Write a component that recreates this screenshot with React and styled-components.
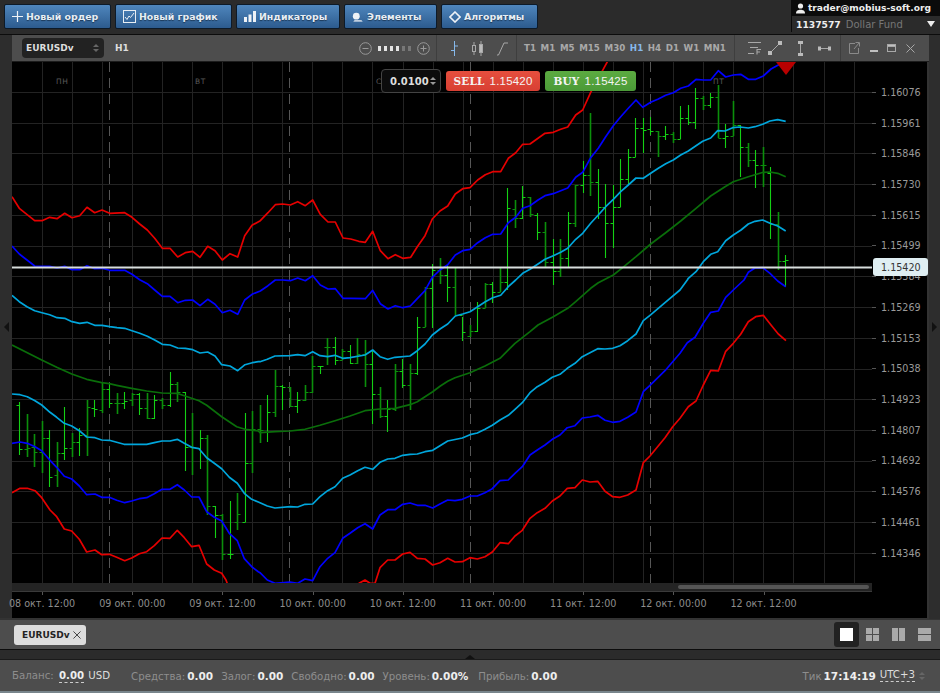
import React from "react";
import styled, { createGlobalStyle } from "styled-components";

const GlobalStyle = createGlobalStyle`
  html, body {
    margin: 0;
    padding: 0;
    background: #2b2b2b;
    overflow: hidden;
  }
  * {
    box-sizing: border-box;
  }
`;

const FONT = `"DejaVu Sans", Verdana, sans-serif`;

// traced points, z = [originX, originY, [x, y, x, y...]] in 3x zoom units
const trace = (...parts) => {
  const out = [];
  parts.forEach(([ox, oy, pts]) => {
    for (let i = 0; i < pts.length; i += 2) {
      const x = ox + pts[i] / 3;
      const y = oy + pts[i + 1] / 3;
      if (!out.length || x > out[out.length - 1][0]) out.push([x, y]);
    }
  });
  return out.map((p) => p[0].toFixed(1) + "," + p[1].toFixed(1)).join(" ");
};

const LINES = [
  {
    color: "#e60000",
    points: trace(
      [12, 60, [0,410,22,445,68,482,90,482,113,472,135,476,158,460,180,473,203,467,225,442,248,458,270,450,293,460,338,458,360,472,383,492,406,510,428,535,451,565,474,565,497,591,520,578,542,574,564,592,587,559,609,572,631,600,654,581,677,591,698,527,720,496,745,482,768,458,790,434,812,432,835,435,857,425,880,437,902,420,925,463,948,486,970,486,993,534,1016,537,1040,544,1060,547,1082,514,1105,572,1128,596,1150,584,1172,595,1195,592]],
      [400, 60, [10,595,32,592,52,560,75,527,97,477,120,453,143,438,166,402,188,386,210,383,233,360,256,344,278,335,302,335,325,295,347,278,368,253,390,252,414,235,435,220,460,217,482,208,503,201,527,165,548,150,572,97,595,55,625,0,660,-60]]
    ),
  },
  {
    color: "#0000ff",
    points: trace(
      [12, 60, [0,558,22,582,45,600,68,618,113,619,135,624,158,619,180,629,203,629,225,617,248,626,270,625,293,631,338,631,360,643,383,659,406,671,428,690,451,709,474,709,497,728,520,721,542,720,564,737,587,718,609,733,631,758,654,751,677,763,698,720,720,703,745,693,768,677,790,660,812,660,835,662,857,654,880,662,902,647,925,675,948,687,970,686,993,715,1016,715,1060,716,1082,691,1105,731,1128,747,1150,737,1172,743,1195,738]],
      [400, 60, [30,741,52,716,75,692,97,652,120,630,143,614,166,585,188,572,210,568,233,548,256,533,278,523,302,522,325,488,347,472,368,445,390,437,414,420,435,407,460,401,482,392,503,384,527,352,548,337,572,293,595,265,617,230,640,197,662,170,685,145,708,120,728,142,752,127,775,117,797,106,820,98,842,85,865,78,888,58]],
      [470, 0, [700,240,722,240,745,212,767,231,790,225,812,223,835,238,857,238,880,228,903,207,925,195,945,182]]
    ),
  },
  {
    color: "#00a6dc",
    points: trace(
      [12, 60, [0,706,22,725,45,740,68,752,90,758,113,764,135,773,158,775,180,785,203,790,225,787,248,796,270,796,293,800,315,803,338,805,360,812,383,820,406,829,428,840,451,853,474,855,497,864,520,865,542,869,564,879,587,876,609,888]],
      [0, 360, [665,14,690,18,713,32,735,14,757,8,775,5]],
      [260, 340, [0,65,22,58,45,48,90,47,113,44,135,47,158,35,180,47,203,50,225,46,248,55,270,53,315,45,338,30,360,50,383,58,405,52,450,48,472,32,495,12,505,0]],
      [400, 60, [30,888,52,872,75,850,97,825,120,807,143,792,166,768,188,762,210,755,233,740,256,725,278,713,302,706,325,680,347,660,368,640,390,628,414,612,435,598,460,587,482,577,503,565,527,538,548,520,572,490,595,465,617,440,640,418,662,395,685,375,708,354,730,355,752,340,775,325,797,311,820,300,842,285,865,273,888,257]],
      [680, 60, [22,272,45,252,68,244,92,234,113,212,135,213,158,203,180,201,205,204,225,200,248,193,270,183,293,179,317,184]]
    ),
  },
  {
    color: "#0a6e0a",
    points: trace(
      [12, 345, [0,0,89,45]],
      [0, 360, [170,22,215,42,260,58,305,68,328,71,350,76,395,85,440,93,486,99,530,100,553,107,597,122,620,136,665,170,710,200,735,208,775,213]],
      [260, 340, [0,278,45,275,90,273,135,268,180,256,225,242,270,228,315,212,360,207,405,205,450,194,472,185,495,170,518,155,540,139,563,124,585,113,630,98,675,78,720,55]],
      [400, 60, [300,890,345,850,390,815,414,795,460,770,503,745,527,725,572,685,595,668,640,645,665,625,708,590,752,552,797,518,842,483,888,445]],
      [680, 60, [45,450,92,408,135,380,160,365,205,350,250,337,270,336,293,340,317,350]]
    ),
  },
  {
    color: "#00a6dc",
    points: trace(
      [0, 360, [36,102,60,104,82,110,105,122,125,135,150,157,170,172,193,190,215,198,238,212,260,231,285,233,305,240,328,241,350,247,372,253,395,253,440,253,463,248,486,243,510,243,532,238,553,250,575,262,597,266,620,293,643,310,665,326,688,352,712,370,733,400,755,418,775,426]],
      [260, 340, [0,488,22,498,45,504,90,500,113,501,135,493,158,492,180,470,203,452,225,440,248,415,270,405,293,392,315,382,338,388,360,367,383,357,405,355,428,346,450,343,472,342,495,335,518,331,540,317,563,303,607,294,630,284,652,279,675,268,697,256,720,240,745,226,765,208,787,188,810,158,832,140,855,127,877,112]],
      [550, 280, [0,300,30,283,52,265,75,250,97,230,120,218,143,206,165,207,188,205,210,197,233,182,258,162,280,122,300,106,345,68,390,30,412,0]],
      [400, 60, [662,855,685,840,708,820,730,785,752,765,797,720,842,680,865,655,888,635]],
      [680, 60, [0,680,22,660,48,635,70,605,92,583,113,575,137,542,160,525,183,510,205,492,225,484,248,480,270,490,293,498,317,513]]
    ),
  },
  {
    color: "#0000ff",
    points: trace(
      [0, 360, [36,250,60,246,82,250,105,260,125,272,150,301,170,322,193,349,215,357,238,378,260,404,285,402,305,412,328,412,350,421,374,428,395,423,418,416,440,413,463,401,486,388,510,388,532,374,553,390,575,411,597,411,620,455,643,472,665,483,688,520,712,542,733,596,755,620,775,635]],
      [260, 340, [0,698,22,720,45,730,90,726,113,730,135,717,158,722,180,680,203,655,225,638,248,595,270,580,293,563,315,551,338,567,360,525,383,509,405,509,428,493,450,489,472,496,495,496,518,504,540,492,563,480,585,482,607,478,630,468,652,468,675,458,697,446,720,422,745,420,765,400,787,380,810,345,832,330,855,315,877,298]],
      [550, 280, [0,485,30,465,52,443,75,437,97,414,120,411,143,406,165,421,188,427,210,424,233,412,258,396,280,335,300,316,345,272,390,220,412,188,435,172,460,130,482,97,505,93,527,52,550,30,582,0]],
      [680, 60, [160,690,183,668,205,637,225,624,248,623,270,640,293,663,317,680]]
    ),
  },
  {
    color: "#e60000",
    points: trace(
      [0, 360, [36,398,60,385,82,385,105,392,125,413,150,450,170,470,193,507,215,513,238,538,260,576,285,570,305,584,328,583,350,592,374,602,395,594,418,581,440,575,463,557,486,534,510,535,532,511,553,533,575,560,597,556,620,612,643,630,665,640,678,660,700,720,1050,720]],
      [260, 340, [297,730,315,720,330,730,345,730,360,683,383,660,405,660,428,642,450,637,472,655,495,657,518,675,540,668,563,655,585,666,607,665,630,653,652,657,675,650,697,636,720,608,745,611,765,588,787,571,810,535,832,518,855,505,877,483]],
      [550, 280, [0,670,30,648,52,625,75,623,97,600,120,606,143,604,165,634,188,650,210,652,233,645,258,630,280,548,300,528,345,473,368,440,390,415,415,380,438,363,460,315,482,271,505,273,527,214,550,190,572,163,595,125,617,110,640,106,663,135,685,162,708,182]]
    ),
  },
];

// [high, low, open, close, dark]
const BARS = [
  null,
  [402,455,405,449,0],[414,457,449,448,1],[434,467,447,452,1],[421,473,452,438,1],[430,487,438,477,0],
  [442,487,475,453,1],[407,460,453,448,0],[433,457,448,442,1],[428,456,442,435,0],[400,456,435,407,1],
  [400,417,408,409,0],[383,413,410,389,1],[384,408,389,403,0],[393,414,403,403,1],[392,409,403,401,0],
  [393,406,400,394,1],[393,415,394,408,0],[393,419,408,418,1],[395,419,418,400,0],[398,409,400,405,1],
  [372,407,405,384,0],[382,402,384,392,1],[392,471,392,447,0],[413,475,447,447,1],[430,469,448,438,0],
  [435,515,438,506,1],[506,538,506,515,0],[514,560,515,554,1],[501,559,554,554,0],[493,530,522,514,1],
  [413,522,522,463,0],[411,473,463,429,1],[405,443,429,430,1],[395,442,432,412,0],[370,417,412,386,1],
  [385,410,386,387,0],[387,407,387,406,1],[392,413,406,400,0],[385,401,400,392,1],[356,393,392,366,1],
  [366,374,366,366,0],[338,365,347,347,1],[337,365,347,360,0],[349,360,360,351,1],[345,364,351,363,0],
  [338,364,363,354,1],[340,387,354,364,1],[350,424,364,394,0],[387,418,394,416,1],[400,432,416,409,0],
  [364,411,409,371,1],[359,388,371,385,0],[364,410,385,373,1],[317,375,373,327,0],[287,327,327,288,1],
  [264,328,288,270,0],[258,284,270,275,1],[265,302,275,287,0],[268,315,287,315,1],[317,341,315,332,0],
  [325,337,336,331,1],[302,332,331,308,0],[283,308,308,284,1],[282,303,284,292,0],[268,292,292,282,1],
  [188,290,282,208,0],[200,228,209,218,1],[186,219,218,197,0],[197,217,197,214,1],[213,240,215,232,0],
  [222,268,232,262,1],[239,285,262,271,0],[239,277,271,258,1],[212,267,258,223,0],[185,227,223,185,1],
  [161,193,185,175,0],[113,196,175,182,1],[169,219,182,207,0],[184,258,207,223,0],[185,248,223,207,0],
  [159,207,207,179,0],[149,185,179,157,0],[118,157,157,128,0],[118,153,128,130,0],[117,135,129,131,0],
  [131,157,131,136,1],[126,140,136,134,0],[132,143,134,139,1],[106,139,139,118,0],[105,125,118,122,0],
  [88,129,122,98,0],[96,110,98,105,1],[93,108,105,97,0],[85,138,97,138,1],[124,148,138,136,0],
  [101,136,136,125,1],[125,177,125,147,0],[143,167,147,160,1],[150,188,160,165,0],[147,187,165,165,1],
  [167,239,173,224,0],[212,270,224,261,1],[255,287,261,260,0],
];

const PRICES = [
  "1.16076", "1.15961", "1.15846", "1.15730", "1.15615", "1.15499", "1.15384", "1.15269",
  "1.15153", "1.15038", "1.14923", "1.14807", "1.14692", "1.14576", "1.14461", "1.14346",
];

const TIMES = [
  "08 окт. 12:00", "09 окт. 00:00", "09 окт. 12:00", "10 окт. 00:00", "10 окт. 12:00",
  "11 окт. 00:00", "11 окт. 12:00", "12 окт. 00:00", "12 окт. 12:00",
];

const FRAMES = ["T1", "M1", "M5", "M15", "M30", "H1", "H4", "D1", "W1", "MN1"];

const Page = styled.div`
  width: 940px;
  height: 693px;
  display: flex;
  flex-direction: column;
  background: #2b2b2b;
  font-family: ${FONT};
  overflow: hidden;
`;

const TopBar = styled.div`
  height: 35px;
  flex: none;
  display: flex;
  align-items: flex-start;
  padding: 4px 0 0 4px;
  gap: 4px;
  background: #2b2b2b;
  border-bottom: 1px solid #0c0c0c;
`;

const ActionButton = styled.div`
  width: ${(p) => p.$w}px;
  height: 25px;
  display: flex;
  align-items: center;
  gap: 3px;
  padding-left: 7px;
  background: linear-gradient(#4f86bd, #2c5b8e);
  border: 1px solid #0d1a28;
  border-radius: 2px;
  color: #e8eef4;
  font-size: 9.4px;
  font-weight: bold;
  text-shadow: 0 1px 1px #1b3857;
`;

const Account = styled.div`
  margin: -4px 0 0 auto;
  width: 149px;
  height: 32px;
  font-size: 9.2px;
  font-weight: bold;
  color: #eee;
`;

const AccountMail = styled.div`
  height: 16px;
  background: #0b0b0b;
  display: flex;
  align-items: center;
  gap: 2px;
  padding-left: 4px;
  font-size: 9.1px;
  white-space: nowrap;
`;

const AccountFund = styled.div`
  height: 16px;
  display: flex;
  align-items: center;
  gap: 5px;
  padding: 0 5px 0 4px;
  background: #2b2b2b;
  border-left: 1px solid #0b0b0b;
  span {
    color: #777;
    font-size: 10px;
    font-weight: normal;
  }
  i {
    margin-left: auto;
    border: 4px solid transparent;
    border-top: 6px solid #eee;
    border-bottom: 0;
  }
`;

const Middle = styled.div`
  height: 584px;
  flex: none;
  display: flex;
`;

const SideStrip = styled.div`
  width: ${(p) => p.$w}px;
  flex: none;
  display: flex;
  align-items: center;
  justify-content: center;
  background: #2d2d2d;
  i {
    border: 5px solid transparent;
    border-${(p) => (p.$right ? "right" : "left")}-width: 0;
    border-${(p) => (p.$right ? "left" : "right")}: 5px solid #111;
  }
`;

const ChartWindow = styled.div`
  width: 917px;
  flex: none;
  display: flex;
  flex-direction: column;
  background: #000;
`;

const ChartHeader = styled.div`
  height: 27px;
  flex: none;
  display: flex;
  align-items: center;
  background: #4d4d4d;
  border-bottom: 1px solid #1c1c1c;
  color: #b5b5b5;
  font-size: 9px;
  font-weight: bold;
`;

const HeaderGroup = styled.div`
  height: 100%;
  width: ${(p) => p.$w}px;
  flex: none;
  display: flex;
  align-items: center;
  gap: ${(p) => p.$gap || 0}px;
  padding-left: ${(p) => p.$pad || 0}px;
  border-right: ${(p) => (p.$plain ? "0" : "1px solid #3e3e3e")};
`;

const ZoomControl = styled.div`
  margin: 0 6px 0 auto;
  display: flex;
  align-items: center;
  gap: 5px;
`;

const SymbolSelect = styled.div`
  width: 82px;
  height: 20px;
  display: flex;
  align-items: center;
  justify-content: space-between;
  padding: 0 5px 0 4px;
  background: #222;
  border-radius: 4px;
  color: #ddd;
`;

const FrameName = styled.span`
  color: #ddd;
  margin-left: 11px;
`;

const ZoomDots = styled.div`
  display: flex;
  gap: 3px;
  margin: 0 1px;
`;

const ZoomDot = styled.i`
  width: 3px;
  height: 5px;
  background: ${(p) => (p.$off ? "#777" : "#e4e4e4")};
`;

const Frame = styled.span`
  color: ${(p) => (p.$active ? "#86b8ea" : "#a9a9a9")};
  font-size: 8.7px;
`;

const SpinnerBox = styled.div`
  display: flex;
  flex-direction: column;
  gap: 2px;
  i {
    border: 3px solid transparent;
  }
  i:first-child {
    border-top: 0;
    border-bottom: 3px solid ${(p) => p.$color || "#666"};
  }
  i:last-child {
    border-bottom: 0;
    border-top: 3px solid ${(p) => p.$color || "#666"};
  }
`;

const Spinner = ({ color }) => (
  <SpinnerBox $color={color}>
    <i />
    <i />
  </SpinnerBox>
);

const ChartBody = styled.div`
  flex: 1;
  display: flex;
  position: relative;
`;

const PlotColumn = styled.div`
  width: 860px;
  flex: none;
  display: flex;
  flex-direction: column;
  position: relative;
`;

const PlotSvg = styled.svg`
  display: block;
  flex: none;
`;

const Scroller = styled.div`
  height: 9px;
  flex: none;
  display: flex;
  justify-content: flex-end;
  align-items: center;
  padding-right: 3px;
  background: #242424;
  border-bottom: 1px solid #3a3a3a;
  i {
    width: 191px;
    height: 4px;
    background: #555;
    border-radius: 2px;
  }
`;

const TimeAxis = styled.div`
  flex: 1;
  display: flex;
  margin-left: -15px;
  overflow: hidden;
  border-bottom: 1px solid #333;
`;

const TimeCell = styled.div`
  width: 90.2px;
  flex: none;
  position: relative;
  padding-top: 6px;
  text-align: center;
  white-space: nowrap;
  color: #8d8d8d;
  font-size: 9.6px;
  &::before {
    content: "";
    position: absolute;
    left: 45px;
    top: 0;
    width: 1px;
    height: 3px;
    background: #555;
  }
`;

const PriceAxis = styled.div`
  flex: 1;
  padding-top: 15px;
  border-bottom: 1px solid #333;
  position: relative;
  border-right: 2px solid #333;
`;

const PriceRow = styled.div`
  height: 30.73px;
  display: flex;
  align-items: center;
  gap: 5px;
  color: #9a9a9a;
  font-size: 9.6px;
  &::before {
    content: "";
    width: 4px;
    height: 1px;
    background: #555;
  }
`;

const PriceTag = styled.div`
  position: absolute;
  left: 1px;
  top: 196px;
  width: 55px;
  height: 18px;
  display: flex;
  align-items: center;
  padding-left: 8px;
  background: #dfeef2;
  border-radius: 3px;
  color: #333;
  font-size: 9.6px;
`;

const DayLabel = styled.span`
  position: absolute;
  left: ${(p) => p.$x}px;
  top: 15px;
  color: #5a5a5a;
  font-size: 7.5px;
  letter-spacing: 0.6px;
`;

const Ticket = styled.div`
  position: absolute;
  left: 369px;
  top: 7px;
  display: flex;
  align-items: center;
  gap: 5px;
`;

const LotBox = styled.div`
  width: 60px;
  height: 24px;
  display: flex;
  align-items: center;
  justify-content: space-between;
  padding: 0 4px 0 8px;
  background: #0c0c0c;
  border: 1px solid #444;
  border-radius: 4px;
  color: #ddd;
  font-size: 10px;
  font-weight: bold;
`;

const TradeButton = styled.div`
  width: ${(p) => p.$w}px;
  height: 20px;
  display: flex;
  align-items: center;
  justify-content: center;
  gap: 5px;
  margin-right: ${(p) => p.$gap || 0}px;
  border-radius: 3px;
  background: ${(p) => p.$bg};
  color: #f4f4f4;
  font-family: "Liberation Sans", Arial, sans-serif;
  font-size: 11.5px;
  letter-spacing: 0.2px;
  b {
    font-family: "DejaVu Serif", serif;
    font-size: 10.5px;
  }
`;

const TabBar = styled.div`
  height: 30px;
  flex: none;
  display: flex;
  align-items: center;
  justify-content: space-between;
  padding: 0 3px 0 14px;
  background: #4d4d4d;
  border-top: 1px solid #333;
`;

const Tab = styled.div`
  width: 72px;
  height: 20px;
  display: flex;
  align-items: center;
  justify-content: space-between;
  padding: 0 5px 0 8px;
  background: #dcdcdc;
  border-radius: 3px;
  color: #222;
  font-size: 9px;
  font-weight: bold;
`;

const LayoutButtons = styled.div`
  display: flex;
  gap: 1px;
`;

const LayoutButton = styled.div`
  width: 25px;
  height: 25px;
  display: flex;
  align-items: center;
  justify-content: center;
  border-radius: 3px;
  background: ${(p) => (p.$active ? "#222" : "transparent")};
`;

const Splitter = styled.div`
  height: 11px;
  flex: none;
  display: flex;
  justify-content: center;
  align-items: flex-end;
  background: #2b2b2b;
  border-top: 1px solid #0c0c0c;
  border-bottom: 1px solid #1a1a1a;
  i {
    border: 5px solid transparent;
    border-top: 0;
    border-bottom: 4px solid #111;
  }
`;

const StatusBar = styled.div`
  flex: 1;
  display: flex;
  align-items: center;
  padding: 0 15px 0 12px;
  background: #4d4d4d;
  border-bottom: 2px solid #78858c;
  color: #8e8e8e;
  font-size: 10.2px;
`;

const StatusItem = styled.span`
  margin-right: ${(p) => p.$gap}px;
  white-space: nowrap;
`;

const Value = styled.b`
  margin-left: 2px;
  color: #eee;
  font-size: 10.5px;
`;

const Dashed = styled.span`
  color: ${(p) => (p.$light ? "#ddd" : "#eee")};
  font-weight: ${(p) => (p.$light ? "normal" : "bold")};
  margin-left: ${(p) => (p.$light ? 0 : 2)}px;
  padding-bottom: 1px;
  border-bottom: 1px dashed #ccc;
`;

const Currency = styled.span`
  margin-left: 1px;
  color: #ddd;
`;

const StatusRight = styled.div`
  margin-left: auto;
  display: flex;
  align-items: center;
  gap: 4px;
`;

const Ico = styled.svg`
  flex: none;
  display: block;
`;

const PlusIcon = () => (
  <Ico width="11" height="11" viewBox="0 0 11 11" fill="none" stroke="#eef2f6" strokeWidth="1.2">
    <path d="M5.5 0v11M0 5.5h11" />
  </Ico>
);

const ChartIcon = () => (
  <Ico width="13" height="13" viewBox="0 0 13 13" fill="none" stroke="#e8eef4">
    <rect x=".5" y=".5" width="12" height="12" />
    <path d="M2 7l2 2.5L6 6l1.5 1.5L11 3" />
  </Ico>
);

const BarsIcon = () => (
  <Ico width="12" height="11" viewBox="0 0 12 11" fill="#eef2f6">
    <path d="M0 6h3v5H0zM4.5 3.5h3V11h-3zM9 0h3v11H9z" />
  </Ico>
);

const ElementsIcon = () => (
  <Ico width="12" height="12" viewBox="0 0 14 12" fill="#eef2f6">
    <circle cx="5" cy="5" r="4" />
    <path d="M3 9.5h8l1.5 2H1.5z" opacity=".75" />
  </Ico>
);

const DiamondIcon = () => (
  <Ico width="12" height="12" viewBox="0 0 12 12" fill="none" stroke="#eef2f6" strokeWidth="1.6">
    <path d="M6 1l5 5-5 5-5-5z" />
  </Ico>
);

const UserIcon = () => (
  <Ico width="11" height="11" viewBox="0 0 11 11" fill="#eee">
    <circle cx="5.5" cy="3" r="2.6" />
    <path d="M1 10.5c0-3 2-3.8 4.5-3.8s4.5.8 4.5 3.8z" />
  </Ico>
);

const CircleIcon = ({ plus }) => (
  <Ico width="13" height="13" viewBox="0 0 13 13" fill="none" stroke="#999">
    <circle cx="6.5" cy="6.5" r="5.8" />
    <path d={plus ? "M3.5 6.5h6M6.5 3.5v6" : "M3.5 6.5h6"} />
  </Ico>
);

const ToolIcon = ({ w = 13, h = 15, children, stroke = "#a8a8a8" }) => (
  <Ico width={w} height={h} viewBox={`0 0 ${w} ${h}`} fill="none" stroke={stroke}>
    {children}
  </Ico>
);

const CloseIcon = ({ color = "#a8a8a8", size = 9 }) => (
  <Ico width={size} height={size} viewBox="0 0 9 9" fill="none" stroke={color}>
    <path d="M.5.5l8 8M8.5.5l-8 8" />
  </Ico>
);

const LayoutIcon = ({ kind }) => (
  <Ico width="13" height="13" viewBox="0 0 13 13" fill={kind === "one" ? "#fff" : "#aaa"}>
    {kind === "one" && <rect width="13" height="13" />}
    {kind === "grid" && <path d="M0 0h6v6H0zM7 0h6v6H7zM0 7h6v6H0zM7 7h6v6H7z" />}
    {kind === "cols" && <path d="M0 0h6v13H0zM7 0h6v13H7z" />}
    {kind === "rows" && <path d="M0 0h13v6H0zM0 7h13v6H0z" />}
  </Ico>
);

const Chart = () => {
  const gridX = [];
  for (let i = 0; i < 28; i++) gridX.push(Math.round(41.7 + 30.07 * i) + 0.5);
  const gridY = [];
  for (let i = -1; i < 16; i++) gridY.push(Math.round(92 + 30.73 * i) + 0.5);

  return (
    <PlotSvg width="860" height="521" viewBox="12 62 860 521">
      {gridX.map((x) => (
        <line key={x} x1={x} x2={x} y1="62" y2="583" stroke="#232323" />
      ))}
      {gridY.map((y) => (
        <line key={y} x1="12" x2="872" y1={y} y2={y} stroke="#232323" />
      ))}
      {[109.5, 289.5, 470.5, 650.5].map((x) => (
        <line key={x} x1={x} x2={x} y1="62" y2="583" stroke="#565656" strokeDasharray="10 6" />
      ))}
      {BARS.map((b, i) => {
        if (!b) return null;
        const x = Math.round(11.8 + 7.51 * i) + 0.5;
        const color = b[4] ? "#0b8f0b" : "#14d014";
        return (
          <g key={i} stroke={color} fill="none" strokeWidth="1">
            <path d={`M${x} ${b[0]}V${b[1]}`} strokeWidth={b[4] ? 1.6 : 1.1} />
            <path d={`M${x - 3} ${b[2] + 0.5}H${x}M${x} ${b[3] + 0.5}H${x + 3}`} />
          </g>
        );
      })}
      {LINES.map((l, i) => (
        <polyline
          key={i}
          points={l.points}
          fill="none"
          stroke={l.color}
          strokeWidth="1.7"
          strokeLinejoin="round"
        />
      ))}
      <rect x="12" y="266.5" width="860" height="2" fill="#d8dedd" />
      <polygon points="776,62 796,62 786,75" fill="#b80000" />
    </PlotSvg>
  );
};

export default function App() {
  return (
    <Page>
      <GlobalStyle />
      <TopBar>
        <ActionButton $w={107}>
          <PlusIcon />
          Новый ордер
        </ActionButton>
        <ActionButton $w={117}>
          <ChartIcon />
          Новый график
        </ActionButton>
        <ActionButton $w={104}>
          <BarsIcon />
          Индикаторы
        </ActionButton>
        <ActionButton $w={93}>
          <ElementsIcon />
          Элементы
        </ActionButton>
        <ActionButton $w={97}>
          <DiamondIcon />
          Алгоритмы
        </ActionButton>
        <Account>
          <AccountMail>
            <UserIcon />
            trader@mobius-soft.org
          </AccountMail>
          <AccountFund>
            1137577 <span>Dollar Fund</span>
            <i />
          </AccountFund>
        </Account>
      </TopBar>

      <Middle>
        <SideStrip $w={12}>
          <i />
        </SideStrip>
        <ChartWindow>
          <ChartHeader>
            <HeaderGroup $w={425} $pad={10}>
              <SymbolSelect>
                EURUSDv
                <Spinner />
              </SymbolSelect>
              <FrameName>H1</FrameName>
              <ZoomControl>
                <CircleIcon />
                <ZoomDots>
                  <ZoomDot />
                  <ZoomDot />
                  <ZoomDot />
                  <ZoomDot />
                  <ZoomDot $off />
                  <ZoomDot $off />
                </ZoomDots>
                <CircleIcon plus />
              </ZoomControl>
            </HeaderGroup>
            <HeaderGroup $w={80} $pad={13} $gap={12}>
              <ToolIcon w={9} stroke="#86b8ea">
                <path d="M4.5 0v15M1 9.5h3.5M4.5 5H8" />
              </ToolIcon>
              <ToolIcon w={13}>
                <path d="M3 1v13M10 0v15" />
                <rect x="1.5" y="4.5" width="3" height="6" fill="#4d4d4d" />
                <rect x="8.5" y="3.5" width="3" height="8" fill="#bbb" />
              </ToolIcon>
              <ToolIcon w={13}>
                <path d="M1 14h1.5L8 2h4" />
              </ToolIcon>
            </HeaderGroup>
            <HeaderGroup $w={218} $pad={7} $gap={4.6}>
              {FRAMES.map((f) => (
                <Frame key={f} $active={f === "H1"}>
                  {f}
                </Frame>
              ))}
            </HeaderGroup>
            <HeaderGroup $w={106} $pad={13} $gap={6}>
              <ToolIcon w={14} h={14}>
                <path d="M0 1.5h13M2 6.5h8M0 12.5h6" />
                <path d="M9 13.5V8.5h4M9 11h3" strokeWidth="1.1" />
              </ToolIcon>
              <ToolIcon w={14} h={14}>
                <path d="M2.5 11.5l9-9" />
                <rect x="0" y="10" width="4" height="4" fill="#bbb" stroke="none" />
                <rect x="10" y="0" width="4" height="4" fill="#bbb" stroke="none" />
              </ToolIcon>
              <HeaderGroup $w={24} $pad={9} $plain>
                <ToolIcon w={7} h={15}>
                  <path d="M3.5 2v11" />
                  <rect x="1" y="0" width="5" height="3" fill="#bbb" stroke="none" />
                  <rect x="1" y="12" width="5" height="3" fill="#bbb" stroke="none" />
                </ToolIcon>
              </HeaderGroup>
              <ToolIcon w={13} h={7}>
                <path d="M2 3.5h9" />
                <rect x="0" y="1.5" width="3" height="4" fill="#bbb" stroke="none" />
                <rect x="10" y="1.5" width="3" height="4" fill="#bbb" stroke="none" />
              </ToolIcon>
            </HeaderGroup>
            <HeaderGroup $w={88} $pad={8} $gap={8.5} $plain>
              <ToolIcon w={11} h={12} stroke="#8a8a8a">
                <path d="M6 1.5H.5v10h9V6M5 7l5-6M6.5.5h4v4" />
              </ToolIcon>
              <ToolIcon w={10} h={10}>
                <rect x="1" y="7" width="8" height="2" fill="#c0c0c0" stroke="none" />
              </ToolIcon>
              <ToolIcon w={10} h={10}>
                <rect x=".5" y="1.5" width="8" height="7" />
                <rect x=".5" y="1.5" width="8" height="2" fill="#c0c0c0" />
              </ToolIcon>
              <CloseIcon />
            </HeaderGroup>
          </ChartHeader>

          <ChartBody>
            <PlotColumn>
              <Chart />
              <Scroller>
                <i />
              </Scroller>
              <TimeAxis>
                {TIMES.map((t) => (
                  <TimeCell key={t}>{t}</TimeCell>
                ))}
              </TimeAxis>
              <DayLabel $x={44}>ПН</DayLabel>
              <DayLabel $x={183}>ВТ</DayLabel>
              <DayLabel $x={364}>СР</DayLabel>
              <DayLabel $x={701}>ПТ</DayLabel>
              <Ticket>
                <LotBox>
                  0.0100
                  <Spinner color="#999" />
                </LotBox>
                <TradeButton $w={94} $bg="linear-gradient(#e64f3e, #d83f33)">
                  <b>SELL</b> 1.15420
                </TradeButton>
                <TradeButton $w={91} $bg="linear-gradient(#5cab41, #4b9a37)" $gap={-1}>
                  <b>BUY</b> 1.15425
                </TradeButton>
              </Ticket>
            </PlotColumn>
            <PriceAxis>
              {PRICES.map((p) => (
                <PriceRow key={p}>{p}</PriceRow>
              ))}
              <PriceTag>1.15420</PriceTag>
            </PriceAxis>
          </ChartBody>
        </ChartWindow>
        <SideStrip $w={11} $right>
          <i />
        </SideStrip>
      </Middle>

      <TabBar>
        <Tab>
          EURUSDv
          <CloseIcon color="#333" size={8} />
        </Tab>
        <LayoutButtons>
          <LayoutButton $active>
            <LayoutIcon kind="one" />
          </LayoutButton>
          <LayoutButton>
            <LayoutIcon kind="grid" />
          </LayoutButton>
          <LayoutButton>
            <LayoutIcon kind="cols" />
          </LayoutButton>
          <LayoutButton>
            <LayoutIcon kind="rows" />
          </LayoutButton>
        </LayoutButtons>
      </TabBar>

      <Splitter>
        <i />
      </Splitter>

      <StatusBar>
        <StatusItem $gap={21}>
          Баланс: <Dashed>0.00</Dashed> <Currency>USD</Currency>
        </StatusItem>
        <StatusItem $gap={8}>
          Средства:<Value>0.00</Value>
        </StatusItem>
        <StatusItem $gap={8}>
          Залог:<Value>0.00</Value>
        </StatusItem>
        <StatusItem $gap={8}>
          Свободно:<Value>0.00</Value>
        </StatusItem>
        <StatusItem $gap={10}>
          Уровень:<Value>0.00%</Value>
        </StatusItem>
        <StatusItem $gap={0}>
          Прибыль:<Value>0.00</Value>
        </StatusItem>
        <StatusRight>
          <StatusItem $gap={0}>
            Тик<Value>17:14:19</Value>
          </StatusItem>
          <Dashed $light>UTC+3</Dashed>
          <Spinner color="#666" />
        </StatusRight>
      </StatusBar>
    </Page>
  );
}
